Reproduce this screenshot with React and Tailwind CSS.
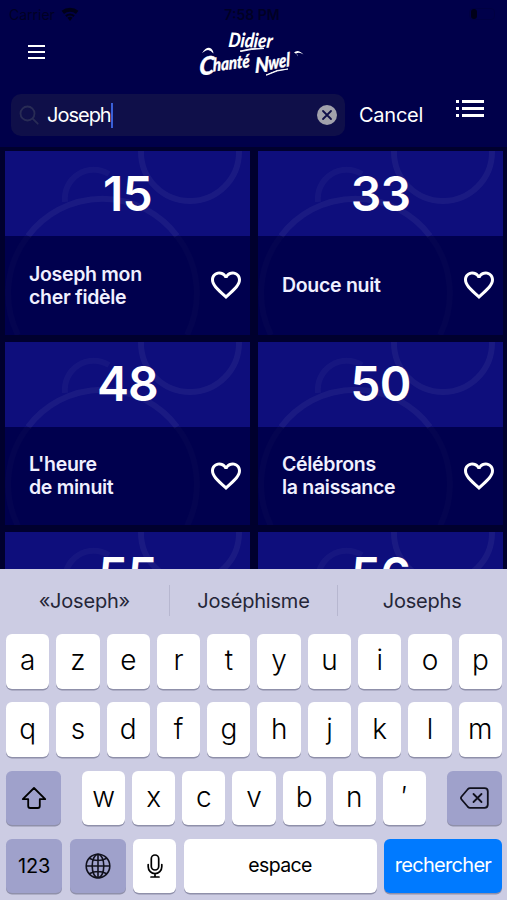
import React from 'react';
import { MdFavoriteBorder } from 'react-icons/md';

const songs = [
  { number: 15, title: ['Joseph mon', 'cher fidèle'] },
  { number: 33, title: ['Douce nuit'] },
  { number: 48, title: ["L'heure", 'de minuit'] },
  { number: 50, title: ['Célébrons', 'la naissance'] },
  { number: 55, title: [] },
  { number: 56, title: [] },
];

const suggestions = ['«Joseph»', 'Joséphisme', 'Josephs'];

const rows = [
  ['a', 'z', 'e', 'r', 't', 'y', 'u', 'i', 'o', 'p'],
  ['q', 's', 'd', 'f', 'g', 'h', 'j', 'k', 'l', 'm'],
];

const bottomLetters = ['w', 'x', 'c', 'v', 'b', 'n', '′'];

function StatusBar() {
  return (
    <div className="flex h-7 items-center justify-between pl-[9px] pr-3 text-[14px] text-[#000024]">
      <div className="flex w-40 items-center gap-1.5">
        <span>Carrier</span>
        <svg width="18" height="14" viewBox="0 0 18 14" fill="#000018">
          <path d="M9 14l2.600-3.200a4 4 0 0 0-5.200 0z" />
          <path d="M4.200 8.200a7.300 7.300 0 0 1 9.600 0l-1.400 1.800a5.200 5.200 0 0 0-6.800 0z" />
          <path d="M.6 3.800a13 13 0 0 1 16.800 0L15 7a9.500 9.500 0 0 0-12 0z" />
        </svg>
      </div>
      <span className="font-semibold">7:58 PM</span>
      <div className="flex w-40 justify-end">
        <div className="flex h-3 w-[26px] items-center rounded-sm border border-[#000042] pl-px">
          <div className="h-2.5 w-1.5 rounded-sm bg-[#000018]" />
        </div>
      </div>
    </div>
  );
}

function Logo() {
  return (
    <svg width="108" height="50" viewBox="0 0 108 50" fill="white" className="overflow-visible font-['Lato'] font-black italic">
      <text fontSize="20" textLength="44" lengthAdjust="spacingAndGlyphs" transform="translate(29 17) rotate(1) skewX(-5)">Didier</text>
      <path d="M41 21q12-3.500 24-2.500-13 .5-23 3z" stroke="white" strokeWidth=".9" />
      <g stroke="white" strokeWidth=".3">
        <text fontSize="25" textLength="15" lengthAdjust="spacingAndGlyphs" transform="translate(0 45.500) rotate(-6) skewX(-8)">C</text>
        <text fontSize="18" textLength="37" lengthAdjust="spacingAndGlyphs" transform="translate(14 41.500) rotate(-7) skewX(-6)">hanté</text>
        <text fontSize="21" textLength="14" lengthAdjust="spacingAndGlyphs" transform="translate(56 43) rotate(-6) skewX(-6)">N</text>
        <text fontSize="19" textLength="22" lengthAdjust="spacingAndGlyphs" transform="translate(69.500 40) rotate(-10) skewX(-8)">wel</text>
      </g>
      <path d="M67 45q11-6 22-6-11 1-21 6z" stroke="white" strokeWidth=".9" />
      <path d="M3 23q4-6 8-5 3 1 3.500 5.500-4-5-7.500-3zM95 22.500q4-4 9.500 2-4-3-7.500-1 2 1 2 3-1-3-4-4z" />
    </svg>
  );
}

function SearchBar() {
  return (
    <div className="flex h-[55px] items-start pl-[11px] pt-0.5">
      <div className="flex h-[42px] w-[334px] items-center rounded-[10px] bg-[#0f0f49] pl-2 pr-2">
        <svg width="20" height="20" viewBox="0 0 20 20" fill="none" stroke="#292c55" strokeWidth="1.800" strokeLinecap="round">
          <circle cx="8.500" cy="8.500" r="7" />
          <path d="M13.700 13.700l5 5" />
        </svg>
        <span className="ml-2 text-[20px] tracking-[-1px] text-white">Joseph</span>
        <div className="h-[25px] w-[2px] bg-[#3a5fd8]" />
        <svg className="ml-auto" width="20" height="20" viewBox="0 0 20 20">
          <circle cx="10" cy="10" r="10" fill="#a2a2ac" />
          <path d="M6 6l8 8M14 6l-8 8" stroke="#0f0f49" strokeWidth="1.800" strokeLinecap="round" />
        </svg>
      </div>
      <span className="ml-3.5 w-[66px] text-[20px] leading-[43px] tracking-[-0.25px] text-white">Cancel</span>
      <svg className="ml-[31px] mt-1.5" width="28" height="17" viewBox="0 0 28 17" fill="white">
        <path d="M0 0h3v3H0zM6 0h22v3H6zM0 7h3v3H0zM6 7h22v3H6zM0 14h3v3H0zM6 14h22v3H6z" />
      </svg>
    </div>
  );
}

function SongCard({ song }) {
  return (
    <div className="relative h-[183.5px] overflow-hidden bg-[#00004e]">
      <div className="h-[85px] bg-[#0e0e7c]" />
      <svg className="absolute inset-0" width="245" height="184" fill="none" stroke="white" strokeWidth="6">
        <g strokeOpacity=".05">
          <circle cx="185" cy="1" r="49" />
          <path d="M60 51a29 29 0 0 1 44-28" strokeOpacity=".035" />
          <path d="M23 85a93 93 0 0 1 149 0" />
        </g>
        <path d="M23 85a93 93 0 0 0-10 99M172 85a93 93 0 0 1 10 99" strokeOpacity=".015" />
      </svg>
      <div className="absolute inset-0">
        <div className="flex h-[85px] items-center justify-center text-[48px] font-semibold tracking-[-0.8px] text-white">
          {song.number}
        </div>
        {song.title.length > 0 && (
          <div className="flex h-[98px] items-center justify-between pl-6 pr-1.5 text-white">
            <div className="pt-px text-[19.5px] font-semibold leading-[23px] tracking-[-0.3px] text-[#f0f0ff]">
              {song.title.map((line) => (
                <div key={line}>{line}</div>
              ))}
            </div>
            <MdFavoriteBorder size={36} />
          </div>
        )}
      </div>
    </div>
  );
}

function Key({ children, className = 'flex-1 bg-white text-[28px] font-[350] pb-0.5' }) {
  return (
    <div className={`flex h-[54.500px] items-center justify-center rounded-md shadow-[0_1.5px_0_#8f90aa] ${className}`}>
      {children}
    </div>
  );
}

function Keyboard() {
  return (
    <div className="relative h-[331px] bg-[#cccce3] text-black">
      <div className="grid h-[65px] grid-cols-3 items-center pr-px">
        {suggestions.map((word, i) => (
          <div
            key={word}
            className={`mb-0.5 flex h-[31px] items-center justify-center text-[20px] tracking-[-0.2px] text-[#252638] ${i > 0 ? 'border-l border-[#b7b7d0]' : ''}`}
          >
            {word}
          </div>
        ))}
      </div>
      <div className="flex flex-col gap-[13.8px] pl-1.5 pr-[5px]">
        {rows.map((row) => (
          <div key={row[0]} className="flex gap-[7px]">
            {row.map((letter) => (
              <Key key={letter}>{letter}</Key>
            ))}
          </div>
        ))}
        <div className="flex justify-between">
          <Key className="w-[55px] bg-[#9fa1cb]">
            <svg width="26" height="24" viewBox="0 0 26 24" fill="none" stroke="black" strokeWidth="1.800" strokeLinejoin="round">
              <path d="M13 2L1.800 13.200h5.400V20q0 2 2 2h7.600q2 0 2-2v-6.800h5.400z" />
            </svg>
          </Key>
          <div className="flex w-[344px] gap-[7px]">
            {bottomLetters.map((letter) => (
              <Key key={letter}>{letter}</Key>
            ))}
          </div>
          <Key className="w-[55px] bg-[#9fa1cb]">
            <svg width="29" height="22" viewBox="0 0 29 22" fill="none" stroke="#10101c" strokeWidth="1.800" strokeLinecap="round" strokeLinejoin="round">
              <path d="M10 1.200h14.500q3.300 0 3.300 3.300v13q0 3.300-3.300 3.300H10q-1.200 0-2-.8L1.600 12.500q-1.300-1.500 0-3L8 2q.8-.8 2-.8z" />
              <path d="M13.500 7l8 8M21.500 7l-8 8" />
            </svg>
          </Key>
        </div>
        <div className="flex gap-[7.500px]">
          <Key className="w-14 bg-[#9fa1cb] text-[20px] tracking-[-0.2px]">123</Key>
          <Key className="w-14 bg-[#9fa1cb]">
            <svg width="26" height="26" viewBox="0 0 26 26" fill="none" stroke="#10101c" strokeWidth="1.600">
              <circle cx="13" cy="13" r="11.800" />
              <ellipse cx="13" cy="13" rx="5.800" ry="11.800" />
              <path d="M13 1v24M1 13h24M4.200 5.200q8.800 4.600 17.600 0M4.200 20.800q8.800-4.600 17.600 0" />
            </svg>
          </Key>
          <Key className="w-[43px] bg-white">
            <svg width="16" height="24" viewBox="0 0 16 24" fill="none" stroke="black" strokeWidth="1.700" strokeLinecap="round">
              <rect x="4.300" y="1" width="7.400" height="15" rx="3.700" />
              <path d="M1.200 10.500v2.300a6.800 6.800 0 0 0 13.600 0v-2.300M8 19.700V23M4 23h8" />
            </svg>
          </Key>
          <Key className="w-[193px] bg-white pb-0.5 text-[19.500px] tracking-[-0.6px]">espace</Key>
          <Key className="w-[118px] bg-[#007aff] pb-0.5 text-[20px] tracking-[-0.7px] text-white">rechercher</Key>
        </div>
      </div>
    </div>
  );
}

export default function App() {
  return (
    <div className="flex h-[900px] w-[507px] flex-col overflow-hidden bg-[#00004a] font-['Inter',sans-serif]">
      <StatusBar />
      <header className="grid h-16 grid-cols-3 pl-7">
        <div className="mt-[17px] flex flex-col gap-1">
          <div className="h-0.5 w-[17px] bg-white" />
          <div className="h-0.5 w-[17px] bg-white" />
          <div className="h-0.5 w-[17px] bg-white" />
        </div>
        <div className="-ml-[5px] flex h-fit items-start pt-0.5 pl-4">
          <Logo />
        </div>
      </header>
      <SearchBar />
      <main className="h-[422px] overflow-hidden bg-[#00002e] pl-[5px] pr-1 pt-1">
        <div className="grid grid-cols-2 gap-x-2 gap-y-[7px]">
          {songs.map((song) => (
            <SongCard key={song.number} song={song} />
          ))}
        </div>
      </main>
      <Keyboard />
    </div>
  );
}
